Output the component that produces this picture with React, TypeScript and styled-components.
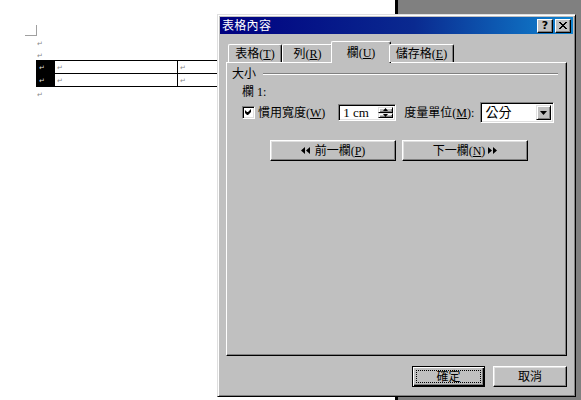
import React from "react";
import styled, { createGlobalStyle } from "styled-components";

const GlobalStyle = createGlobalStyle`
  html, body {
    margin: 0;
    padding: 0;
    overflow: hidden;
  }
  body {
    font-family: "Liberation Serif", "Noto Sans CJK TC", serif;
    font-size: 12px;
  }
`;

const Screen = styled.div`
  position: relative;
  width: 581px;
  height: 400px;
  display: flex;
  overflow: hidden;
`;

const Page = styled.div`
  width: 395px;
  height: 100%;
  background: #fff;
  padding: 25px 0 0 25px;
  box-sizing: border-box;
`;

const PageEdge = styled.div`
  width: 3px;
  background: #000;
`;

const Backdrop = styled.div`
  flex: 1;
  background: #808080;
`;

const Corner = styled.div`
  width: 11px;
  height: 10px;
  border-right: 1px solid #a0a0a0;
  border-bottom: 1px solid #a0a0a0;
`;

const DocBody = styled.div`
  margin-left: 11px;
`;

const Para = styled.div`
  height: 12px;
  line-height: 12px;
  padding-left: 1px;
`;

const Mark = styled.span<{ $light?: boolean }>`
  font-family: "DejaVu Sans", sans-serif;
  font-size: 7px;
  color: ${(p) => (p.$light ? "#ddd" : "#888")};
`;

const DocTable = styled.table`
  border-collapse: collapse;
  width: 350px;
  table-layout: fixed;
`;

const Cell = styled.td<{ $w?: number; $sel?: boolean }>`
  border: 1px solid #000;
  height: 11px;
  padding: 0 0 0 2px;
  line-height: 10px;
  width: ${(p) => (p.$w ? `${p.$w}px` : "auto")};
  background: ${(p) => (p.$sel ? "#000" : "#fff")};
`;

/* ---------- dialog ---------- */

const Win = styled.div`
  position: absolute;
  left: 217px;
  top: 14px;
  width: 359px;
  height: 383px;
  box-sizing: border-box;
  background: #c0c0c0;
  border: 1px solid;
  border-color: #dfdfdf #000 #000 #dfdfdf;
  box-shadow: inset 1px 1px #fff, inset -1px -1px #808080;
  padding: 2px;
  display: flex;
  flex-direction: column;
`;

const TitleBar = styled.div`
  height: 18px;
  display: flex;
  align-items: center;
  padding: 0 2px 0 2px;
  background: linear-gradient(90deg, #000080 0%, #0a2a90 55%, #1084d0 100%);
  color: #fff;
  font-size: 12px;
`;

const TitleText = styled.span`
  flex: 1;
  line-height: 14px;
  letter-spacing: 0.3px;
`;

const CapBtn = styled.div`
  width: 16px;
  height: 14px;
  box-sizing: border-box;
  background: #c0c0c0;
  border: 1px solid;
  border-color: #fff #000 #000 #fff;
  box-shadow: inset -1px -1px #808080;
  display: flex;
  align-items: center;
  justify-content: center;
  color: #000;
  margin-left: 2px;
  font-family: "DejaVu Sans", sans-serif;
  font-weight: bold;
  font-size: 11px;
  line-height: 11px;
`;

const DlgBody = styled.div`
  flex: 1;
  display: flex;
  flex-direction: column;
  padding: 7px 6px 7px 6px;
`;

const TabStrip = styled.div`
  display: flex;
  align-items: flex-end;
  padding-left: 2px;
  height: 21px;
  position: relative;
  z-index: 1;
`;

const Tab = styled.div<{ $w: number; $active?: boolean }>`
  width: ${(p) => p.$w}px;
  height: ${(p) => (p.$active ? 22 : 18)}px;
  margin: 0 ${(p) => (p.$active ? "-2px" : "0")} ${(p) => (p.$active ? "-1px" : "0")};
  box-sizing: border-box;
  background: #c0c0c0;
  border-top: 1px solid #fff;
  border-left: 1px solid #fff;
  border-right: 1px solid #000;
  border-radius: 2px 2px 0 0;
  box-shadow: inset -1px 0 #808080;
  display: flex;
  align-items: center;
  justify-content: center;
  padding-top: ${(p) => (p.$active ? 0 : 1)}px;
  line-height: 12px;
  white-space: nowrap;
`;

const Panel = styled.div`
  height: 294px;
  box-sizing: border-box;
  border: 1px solid;
  border-color: #fff #000 #000 #fff;
  box-shadow: inset -1px -1px #808080;
  padding: 5px 8px 0 5px;
  display: flex;
  flex-direction: column;
`;

const GroupHead = styled.div`
  display: flex;
  align-items: center;
  height: 12px;
  line-height: 12px;
`;

const GroupRule = styled.div`
  flex: 1;
  margin-left: 7px;
  height: 0;
  border-top: 1px solid #808080;
  border-bottom: 1px solid #fff;
`;

const GroupInner = styled.div`
  padding-left: 10px;
  display: flex;
  flex-direction: column;
`;

const Caption = styled.div`
  margin-top: 6px;
  height: 12px;
  line-height: 12px;
`;

const FieldRow = styled.div`
  margin-top: 4px;
  height: 21px;
  display: flex;
  align-items: center;
`;

const CheckBox = styled.div`
  width: 13px;
  height: 13px;
  box-sizing: border-box;
  background: #fff;
  border: 1px solid;
  border-color: #808080 #fff #fff #808080;
  box-shadow: inset 1px 1px #000, inset -1px -1px #dfdfdf;
  display: flex;
  align-items: center;
  justify-content: center;
`;

const Label = styled.span<{ $gap?: number }>`
  margin-left: ${(p) => p.$gap ?? 0}px;
  line-height: 12px;
  white-space: nowrap;
`;

const Sunken = styled.div<{ $w: number; $h: number; $gap: number }>`
  width: ${(p) => p.$w}px;
  height: ${(p) => p.$h}px;
  margin-left: ${(p) => p.$gap}px;
  box-sizing: border-box;
  background: #fff;
  border: 1px solid;
  border-color: #808080 #fff #fff #808080;
  box-shadow: inset 1px 1px #000, inset -1px -1px #dfdfdf;
  display: flex;
  align-items: stretch;
  padding: 2px;
`;

const FieldText = styled.span`
  flex: 1;
  padding-left: 2px;
  display: flex;
  align-items: center;
  font-size: 13px;
  line-height: 12px;
`;

const SpinCol = styled.div`
  width: 15px;
  display: flex;
  flex-direction: column;
`;

const MiniBtn = styled.div`
  flex: 1;
  box-sizing: border-box;
  background: #c0c0c0;
  border: 1px solid;
  border-color: #dfdfdf #000 #000 #dfdfdf;
  box-shadow: inset 1px 1px #fff, inset -1px -1px #808080;
  display: flex;
  align-items: center;
  justify-content: center;
`;

const ButtonRow = styled.div<{ $top: number; $left: number }>`
  margin-top: ${(p) => p.$top}px;
  padding-left: ${(p) => p.$left}px;
  display: flex;
  gap: 6px;
`;

const PushButton = styled.div<{ $w: number; $h: number; $default?: boolean }>`
  width: ${(p) => p.$w}px;
  height: ${(p) => p.$h}px;
  box-sizing: border-box;
  background: #c0c0c0;
  border: 1px solid;
  border-color: ${(p) => (p.$default ? "#000" : "#fff #000 #000 #fff")};
  box-shadow: ${(p) =>
    p.$default
      ? "inset 1px 1px #fff, inset -1px -1px #000, inset -2px -2px #808080"
      : "inset -1px -1px #808080, inset 1px 1px #dfdfdf"};
  display: flex;
  align-items: center;
  justify-content: center;
  padding: 3px;
  line-height: 12px;
  white-space: nowrap;
`;

const Focus = styled.div`
  flex: 1;
  align-self: stretch;
  border: 1px dotted #000;
  display: flex;
  align-items: center;
  justify-content: center;
`;

const Footer = styled.div`
  margin-top: 10px;
  display: flex;
  justify-content: flex-end;
  gap: 8px;
`;

const Arrows = styled.svg<{ $side: "l" | "r" }>`
  margin: ${(p) => (p.$side === "l" ? "0 5px 0 0" : "0 0 0 3px")};
`;

const Mn = ({ k }: { k: string }) => (
  <>
    (<u>{k}</u>)
  </>
);

const DoubleArrow = ({ dir }: { dir: "l" | "r" }) => (
  <Arrows $side={dir} width="9" height="7" viewBox="0 0 9 7">
    {dir === "l" ? (
      <path d="M0 3.5 L4 0 L4 7 Z M5 3.5 L9 0 L9 7 Z" fill="#000" />
    ) : (
      <path d="M0 0 L4 3.5 L0 7 Z M5 0 L9 3.5 L5 7 Z" fill="#000" />
    )}
  </Arrows>
);

const Tri = ({ up }: { up?: boolean }) => (
  <svg width="5" height="3" viewBox="0 0 5 3">
    <path d={up ? "M0 3 L2.5 0 L5 3 Z" : "M0 0 L5 0 L2.5 3 Z"} fill="#000" />
  </svg>
);

export default function App() {
  return (
    <>
      <GlobalStyle />
      <Screen>
        <Page>
          <Corner />
          <DocBody>
            <Para>
              <Mark>↵</Mark>
            </Para>
            <Para>
              <Mark>↵</Mark>
            </Para>
            <DocTable>
              <tbody>
                {[0, 1].map((r) => (
                  <tr key={r}>
                    <Cell $w={15} $sel>
                      <Mark $light>↵</Mark>
                    </Cell>
                    <Cell $w={120}>
                      <Mark>↵</Mark>
                    </Cell>
                    <Cell>
                      <Mark>↵</Mark>
                    </Cell>
                  </tr>
                ))}
              </tbody>
            </DocTable>
            <Para>
              <Mark>↵</Mark>
            </Para>
          </DocBody>
        </Page>
        <PageEdge />
        <Backdrop />

        <Win>
          <TitleBar>
            <TitleText>表格內容</TitleText>
            <CapBtn>?</CapBtn>
            <CapBtn>
              <svg width="8" height="7" viewBox="0 0 8 7">
                <path
                  d="M0 0h2v1h1v1h2V1h1V0h2v1H7v1H6v1H5v1h1v1h1v1h1v1H6V6H5V5H3v1H2v1H0V6h1V5h1V4h1V3H2V2H1V1H0z"
                  fill="#000"
                />
              </svg>
            </CapBtn>
          </TitleBar>

          <DlgBody>
            <TabStrip>
              <Tab $w={54}>
                表格<Mn k="T" />
              </Tab>
              <Tab $w={51}>
                列<Mn k="R" />
              </Tab>
              <Tab $w={60} $active>
                欄<Mn k="U" />
              </Tab>
              <Tab $w={65}>
                儲存格<Mn k="E" />
              </Tab>
            </TabStrip>

            <Panel>
              <GroupHead>
                大小
                <GroupRule />
              </GroupHead>
              <GroupInner>
                <Caption>欄 1:</Caption>
                <FieldRow>
                  <CheckBox>
                    <svg width="7" height="7" viewBox="0 0 7 7">
                      <path d="M6 0v3L3 6H2L0 4V1l2 2h1l3-3z" fill="#000" />
                    </svg>
                  </CheckBox>
                  <Label $gap={3}>
                    慣用寬度<Mn k="W" />
                  </Label>
                  <Sunken $w={58} $h={17} $gap={13}>
                    <FieldText>1 cm</FieldText>
                    <SpinCol>
                      <MiniBtn>
                        <Tri up />
                      </MiniBtn>
                      <MiniBtn>
                        <Tri />
                      </MiniBtn>
                    </SpinCol>
                  </Sunken>
                  <Label $gap={8}>
                    度量單位<Mn k="M" />:
                  </Label>
                  <Sunken $w={74} $h={21} $gap={6}>
                    <FieldText>公分</FieldText>
                    <SpinCol>
                      <MiniBtn>
                        <svg width="7" height="4" viewBox="0 0 7 4">
                          <path d="M0 0 L7 0 L3.5 4 Z" fill="#000" />
                        </svg>
                      </MiniBtn>
                    </SpinCol>
                  </Sunken>
                </FieldRow>
              </GroupInner>
              <ButtonRow $top={17} $left={38}>
                <PushButton $w={126} $h={21}>
                  <DoubleArrow dir="l" />
                  前一欄<Mn k="P" />
                </PushButton>
                <PushButton $w={126} $h={21}>
                  下一欄<Mn k="N" />
                  <DoubleArrow dir="r" />
                </PushButton>
              </ButtonRow>
            </Panel>

            <Footer>
              <PushButton $w={73} $h={21} $default>
                <Focus>確定</Focus>
              </PushButton>
              <PushButton $w={74} $h={21}>
                取消
              </PushButton>
            </Footer>
          </DlgBody>
        </Win>
      </Screen>
    </>
  );
}
